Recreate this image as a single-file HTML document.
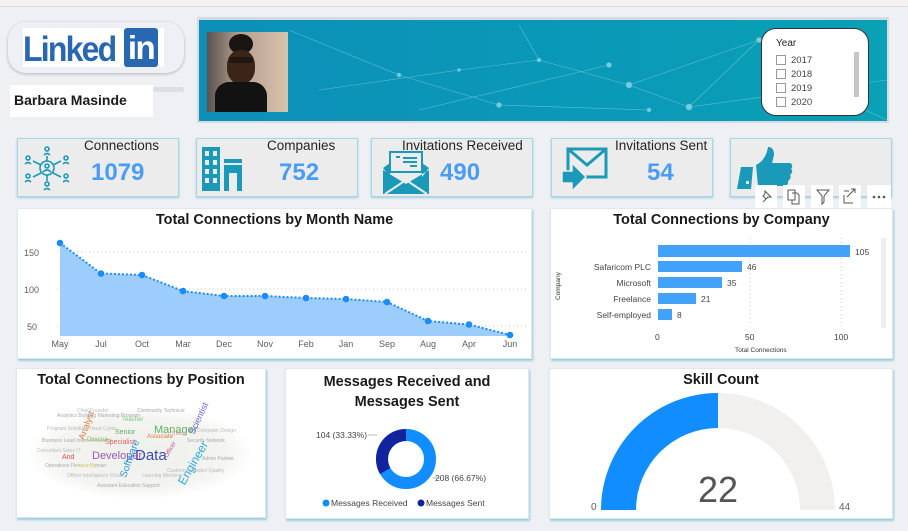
<!DOCTYPE html>
<html><head><meta charset="utf-8"><style>
*{margin:0;padding:0;box-sizing:border-box}
body{width:908px;height:531px;background:#eef0f4;font-family:"Liberation Sans",sans-serif;position:relative;overflow:hidden}
.a{position:absolute}
.card{position:absolute;background:#fff;box-shadow:1px 2px 2px rgba(120,190,210,.7);border:1px solid #dfe8ec}
.kpi{position:absolute;background:#ececec;border:1px solid #a9d6e3;box-shadow:0 1px 2px rgba(100,180,210,.6);top:138px;height:59px;width:162px}
.kpi .t{position:absolute;font-size:13.5px;color:#252423;top:-1px}
.kpi .v{position:absolute;font-size:24px;font-weight:bold;color:#4a9df5;top:20px}
.title{position:absolute;width:100%;text-align:center;font-weight:bold;font-size:14.5px;color:#1a1a1a}
.wc span{position:absolute;white-space:nowrap;font-size:5px;line-height:1}
</style></head><body>
<div class="a" style="left:0;top:0;width:908px;height:7px;background:#f3f2f1;border-bottom:1px solid #ddd"></div>

<div class="a" style="left:8px;top:22px;width:176px;height:51px;background:#eef0f5;border-radius:18px;box-shadow:0 1px 3px rgba(0,0,0,.25)"></div>
<div class="a" style="left:23px;top:28px;width:141px;height:39px;background:#fff"></div>
<div class="a" style="left:23px;top:29px;font-size:32px;font-weight:bold;color:#2867b2;letter-spacing:-1.8px;transform:scaleY(1.1);transform-origin:top left">Linked</div>
<div class="a" style="left:124px;top:28px;width:34px;height:39px;background:#2867b2;border-radius:3px;color:#fff;font-size:33px;font-weight:bold;text-align:center;line-height:40px;letter-spacing:-1.5px">in</div>
<div class="a" style="left:10px;top:85px;width:143px;height:32px;background:#fff"></div>
<div class="a" style="left:153px;top:87px;width:31px;height:5px;background:#dcdee2;border-radius:3px"></div>
<div class="a" style="left:14px;top:92px;font-size:14px;font-weight:bold;color:#1a1a1a">Barbara Masinde</div>

<div class="a" style="left:197px;top:17px;width:692px;height:106px;background:#d6dae2"></div>
<div class="a" style="left:199px;top:20px;width:688px;height:101px;background:linear-gradient(90deg,#0d8fb8,#0a9ab8 60%,#0aa0b5)">
<svg width="688" height="101" style="position:absolute;left:0;top:0" stroke="#7fd0e0" stroke-width=".6" fill="#a8e2ee" opacity=".7">
<line x1="90" y1="10" x2="200" y2="55"/><line x1="200" y1="55" x2="300" y2="85"/><line x1="260" y1="50" x2="340" y2="40"/><line x1="340" y1="40" x2="430" y2="65"/><line x1="430" y1="65" x2="560" y2="20"/><line x1="430" y1="65" x2="490" y2="87"/><line x1="490" y1="87" x2="560" y2="20"/><line x1="560" y1="20" x2="650" y2="30"/><line x1="220" y1="90" x2="410" y2="45"/><line x1="300" y1="85" x2="450" y2="90"/><line x1="600" y1="60" x2="688" y2="100"/><line x1="120" y1="70" x2="260" y2="50"/><line x1="340" y1="40" x2="320" y2="5"/><line x1="490" y1="87" x2="688" y2="60"/>
<circle cx="200" cy="55" r="2"/><circle cx="300" cy="85" r="2.5"/><circle cx="340" cy="40" r="2"/><circle cx="430" cy="65" r="3"/><circle cx="560" cy="20" r="2.5"/><circle cx="490" cy="87" r="3"/><circle cx="410" cy="45" r="2.5"/><circle cx="450" cy="90" r="2"/><circle cx="260" cy="50" r="1.5"/><circle cx="650" cy="30" r="2"/></svg>
</div>
<div class="a" style="left:207px;top:32px;width:81px;height:80px;background:linear-gradient(90deg,#5a5250 0%,#b6a08f 40%,#d7c2ad 100%)">
<div class="a" style="left:22px;top:2px;width:24px;height:20px;border-radius:50%;background:#1a1412"></div>
<div class="a" style="left:20px;top:18px;width:28px;height:34px;border-radius:45%;background:#3b2418"></div>
<div class="a" style="left:22px;top:25px;width:24px;height:6px;background:#111;opacity:.6"></div>
<div class="a" style="left:8px;top:50px;width:52px;height:30px;border-radius:14px 14px 0 0;background:#121212"></div>
</div>
<div class="a" style="left:761px;top:28px;width:108px;height:88px;background:#fff;border:1px solid #333;border-radius:15px"></div>
<div class="a" style="left:776px;top:38px;font-size:10px;color:#252423">Year</div>
<div class="a" style="left:854px;top:52px;width:5px;height:45px;background:#c8c6c4"></div>
<div class="a" style="left:776px;top:54px;font-size:9.5px;color:#444;line-height:14px">
<div><span style="display:inline-block;width:10px;height:10px;border:1px solid #999;vertical-align:-2px;margin-right:5px"></span>2017</div>
<div><span style="display:inline-block;width:10px;height:10px;border:1px solid #999;vertical-align:-2px;margin-right:5px"></span>2018</div>
<div><span style="display:inline-block;width:10px;height:10px;border:1px solid #999;vertical-align:-2px;margin-right:5px"></span>2019</div>
<div><span style="display:inline-block;width:10px;height:10px;border:1px solid #999;vertical-align:-2px;margin-right:5px"></span>2020</div>
</div>

<div class="kpi" style="left:17px"><span class="t" style="left:66px">Connections</span><span class="v" style="left:73px">1079</span>
<svg class="a" style="left:5px;top:5px" width="48" height="48" stroke="#1a9ab8" stroke-width="1.6" fill="none"><circle cx="24" cy="24" r="7"/><circle cx="24" cy="22" r="2"/><path d="M20 28q4-4 8 0"/><g><circle cx="24" cy="5" r="2"/><path d="M21 11q3-3 6 0"/><circle cx="24" cy="40" r="2"/><path d="M21 46q3-3 6 0"/><circle cx="5" cy="14" r="2"/><path d="M2 20q3-3 6 0"/><circle cx="43" cy="14" r="2"/><path d="M40 20q3-3 6 0"/><circle cx="5" cy="32" r="2"/><path d="M2 38q3-3 6 0"/><circle cx="43" cy="32" r="2"/><path d="M40 38q3-3 6 0"/><path d="M24 12v5M24 31v6M10 17l8 4M38 17l-8 4M10 33l8-4M38 33l-8-4"/></g></svg></div>
<div class="kpi" style="left:196px"><span class="t" style="left:70px">Companies</span><span class="v" style="left:82px">752</span>
<svg class="a" style="left:5px;top:8px" width="42" height="44" fill="#1a9ab8"><rect x="0" y="0" width="18" height="44"/><rect x="22" y="12" width="18" height="32"/><g fill="#ececec"><rect x="3" y="4" width="4" height="5"/><rect x="11" y="4" width="4" height="5"/><rect x="3" y="13" width="4" height="5"/><rect x="11" y="13" width="4" height="5"/><rect x="3" y="22" width="4" height="5"/><rect x="11" y="22" width="4" height="5"/><rect x="3" y="31" width="4" height="5"/><rect x="11" y="31" width="4" height="5"/><rect x="22" y="16" width="18" height="2"/><rect x="27" y="26" width="8" height="18"/></g></svg></div>
<div class="kpi" style="left:371px"><span class="t" style="left:30px">Invitations Received</span><span class="v" style="left:68px">490</span>
<svg class="a" style="left:11px;top:11px" width="46" height="46"><path d="M7 2h32v20H7z" fill="#ececec" stroke="#1a9ab8" stroke-width="2"/><path d="M13 7h4M20 8h14M20 12h14M27 16h7" stroke="#1a9ab8" stroke-width="2"/><path d="M0 18l7-5v14L0 18zM46 18l-7-5v14zM0 20l23 14 23-14v24H0z" fill="#1a9ab8"/><path d="M2 44l18-12M44 44l-18-12" stroke="#ececec" stroke-width="2"/></svg></div>
<div class="kpi" style="left:551px"><span class="t" style="left:63px">Invitations Sent</span><span class="v" style="left:95px">54</span>
<svg class="a" style="left:8px;top:8px" width="48" height="46" fill="none" stroke="#1a9ab8" stroke-width="3"><rect x="8" y="2" width="38" height="28"/><path d="M8 2l19 16 19-16"/><path d="M2 24h10v-8l14 14-14 14v-8H2z" fill="#1a9ab8" stroke="#ececec" stroke-width="1.5"/></svg></div>
<div class="kpi" style="left:730px">
<svg class="a" style="left:5px;top:6px" width="60" height="50" fill="#1a9ab8"><path d="M5 22h12l-2 22H1z"/><path d="M20 20q10-5 12-18q6 0 6 8l-2 8h18q4 2 1 6q3 2-1 6q2 3-2 6q1 4-4 5H22z"/><rect x="10" y="36" width="3" height="3" fill="#ececec"/></svg></div>

<div class="a" style="left:755px;top:185px;width:138px;height:23px;font-size:0">
<svg width="138" height="23"><g fill="#fff"><rect x="0" y="0" width="22" height="23"/><rect x="28" y="0" width="22" height="23"/><rect x="56" y="0" width="22" height="23"/><rect x="84" y="0" width="22" height="23"/><rect x="112" y="0" width="24" height="23"/></g>
<g stroke="#555" fill="none" stroke-width="1"><path d="M8 17l4-4M10 6l6 6-3 0-2 2-3-3 2-2z"/><rect x="33" y="5" width="7" height="10"/><path d="M37 8h5l2 2v9h-7v-4"/><path d="M62 5h12l-5 6v6l-2 2v-8z"/><path d="M89 10v8h9M92 12l8-8M96 4h4v4M89 6h5"/><circle cx="119" cy="12" r=".8" fill="#555"/><circle cx="124" cy="12" r=".8" fill="#555"/><circle cx="129" cy="12" r=".8" fill="#555"/></g></svg></div>

<div class="card" style="left:17px;top:208px;width:515px;height:151px">
<div class="title" style="top:3px">Total Connections by Month Name</div></div>
<svg class="a" style="left:17px;top:208px" width="515" height="151">
<g stroke="#ccc" stroke-dasharray="1 3"><line x1="40" y1="44" x2="510" y2="44"/><line x1="40" y1="81" x2="510" y2="81"/><line x1="40" y1="118" x2="510" y2="118"/></g>
<path d="M43 35L84 65.5 125 67 166 83 207 88 248 88 289 90 329 91 370 94 411 113 452 116.5 493 127V128H43Z" fill="#9dcdfc"/>
<path d="M43 35L84 65.5 125 67 166 83 207 88 248 88 289 90 329 91 370 94 411 113 452 116.5 493 127" fill="none" stroke="#1a8cff" stroke-width="2" stroke-dasharray="2 2"/>
<g fill="#1a8cff"><circle cx="43" cy="35" r="3.3"/><circle cx="84" cy="65.5" r="3.3"/><circle cx="125" cy="67" r="3.3"/><circle cx="166" cy="83" r="3.3"/><circle cx="207" cy="88" r="3.3"/><circle cx="248" cy="88" r="3.3"/><circle cx="289" cy="90" r="3.3"/><circle cx="329" cy="91" r="3.3"/><circle cx="370" cy="94" r="3.3"/><circle cx="411" cy="113" r="3.3"/><circle cx="452" cy="116.5" r="3.3"/><circle cx="493" cy="127" r="3.3"/></g>
<g font-size="9" fill="#605e5c" font-family="Liberation Sans"><text x="7" y="48">150</text><text x="7" y="85">100</text><text x="10" y="122">50</text>
<g text-anchor="middle"><text x="43" y="139">May</text><text x="84" y="139">Jul</text><text x="125" y="139">Oct</text><text x="166" y="139">Mar</text><text x="207" y="139">Dec</text><text x="248" y="139">Nov</text><text x="289" y="139">Feb</text><text x="329" y="139">Jan</text><text x="370" y="139">Sep</text><text x="411" y="139">Aug</text><text x="452" y="139">Apr</text><text x="493" y="139">Jun</text></g></g></svg>

<div class="card" style="left:550px;top:208px;width:343px;height:151px">
<div class="title" style="top:3px">Total Connections by Company</div></div>
<svg class="a" style="left:550px;top:208px" width="343" height="151">
<g stroke="#ccc" stroke-dasharray="1 3"><line x1="200" y1="30" x2="200" y2="118"/><line x1="291" y1="30" x2="291" y2="118"/></g>
<rect x="331" y="30" width="5" height="90" fill="#eee"/>
<g fill="#42a2f9"><rect x="108" y="37" width="192" height="12"/><rect x="108" y="53" width="84" height="11"/><rect x="108" y="69" width="64" height="11"/><rect x="108" y="85" width="38" height="11"/><rect x="108" y="101" width="14" height="11"/></g>
<g font-size="8.5" fill="#444" font-family="Liberation Sans"><text x="305" y="47">105</text><text x="197" y="62">46</text><text x="177" y="78">35</text><text x="151" y="94">21</text><text x="127" y="110">8</text>
<g text-anchor="end"><text x="101" y="62">Safaricom PLC</text><text x="101" y="78">Microsoft</text><text x="101" y="94">Freelance</text><text x="101" y="110">Self-employed</text></g>
<text x="105" y="132">0</text><text x="195" y="132">50</text><text x="284" y="132">100</text></g>
<text x="185" y="144" font-size="6.5" fill="#333" font-family="Liberation Sans">Total Connections</text>
<text transform="translate(10,92) rotate(-90)" font-size="6.5" fill="#333" font-family="Liberation Sans">Company</text></svg>

<div class="card" style="left:16px;top:368px;width:250px;height:150px">
<div class="title" style="top:3px">Total Connections by Position</div>
<div class="a" style="left:12px;top:38px;width:222px;height:92px;border-radius:50%;background:radial-gradient(ellipse,#eef0ea 0%,#f4f4f2 55%,#fff 72%)"></div>
<div class="a wc" style="left:0;top:0;width:250px;height:150px">
<span style="left:118px;top:79px;font-size:15px;color:#3a4bb0">Data</span>
<span style="left:75px;top:82px;font-size:11px;color:#9b59b6">Developer</span>
<span style="left:137px;top:56px;font-size:11px;color:#5bb35b">Manager</span>
<span style="left:152px;top:88px;font-size:12px;color:#29a9e0;transform:rotate(-60deg)">Engineer</span>
<span style="left:94px;top:85px;font-size:10px;color:#2a9ae0;transform:rotate(-70deg)">Software</span>
<span style="left:55px;top:52px;font-size:9px;color:#e07a3a;transform:rotate(-70deg)">Analyst</span>
<span style="left:165px;top:45px;font-size:9px;color:#6a6ad0;transform:rotate(-65deg)">Scientist</span>
<span style="left:88px;top:70px;font-size:7px;color:#e06060">Specialist</span>
<span style="left:98px;top:60px;font-size:7px;color:#60b060">Senior</span>
<span style="left:45px;top:85px;font-size:7px;color:#e05050">And</span>
<span style="left:130px;top:65px;font-size:6px;color:#e07a3a">Associate</span>
<span style="left:145px;top:78px;font-size:6px;color:#d04a8a;transform:rotate(-60deg)">Officer</span>
<span style="left:70px;top:68px;font-size:6px;color:#8bc34a">Director</span>
<span style="left:40px;top:45px;color:#aaa">Analytics Building Marketing Program</span>
<span style="left:30px;top:58px;color:#bbb">Program Solutions Head Cyber</span>
<span style="left:25px;top:70px;color:#aaa">Business Lead Intern Research</span>
<span style="left:20px;top:80px;color:#bbb">Consultant Sales IT</span>
<span style="left:28px;top:95px;color:#aaa">Operations Finance Human</span>
<span style="left:50px;top:105px;color:#bbb">Officer Intelligence Cloud</span>
<span style="left:80px;top:115px;color:#aaa">Assistant Education Support</span>
<span style="left:150px;top:100px;color:#bbb">Customer Product Quality</span>
<span style="left:170px;top:70px;color:#aaa">Security Network</span>
<span style="left:180px;top:60px;color:#bbb">Computer Design</span>
<span style="left:120px;top:40px;color:#aaa">Community Technical</span>
<span style="left:60px;top:40px;color:#bbb">Chief Founder</span>
<span style="left:185px;top:88px;color:#aaa">Admin Partner</span>
<span style="left:125px;top:105px;color:#bbb">Learning Machine</span>
<span style="left:60px;top:95px;color:#ee8">Strategy</span>
<span style="left:105px;top:48px;color:#7c7;font-size:6px">Teacher</span>
<span style="left:155px;top:62px;color:#e9a;font-size:6px">Intern</span>
</div></div>

<div class="card" style="left:285px;top:368px;width:244px;height:151px">
<div class="title" style="top:3px;line-height:20px">Messages Received and<br>Messages Sent</div></div>
<svg class="a" style="left:285px;top:368px" width="244" height="151">
<circle cx="121" cy="91" r="24" fill="none" stroke="#118dff" stroke-width="12"/>
<path d="M121 61A30 30 0 0 0 95 106L105.4 100A18 18 0 0 1 121 73Z" fill="#12239e"/>
<g stroke="#bbb" stroke-width="1"><line x1="83" y1="67" x2="92" y2="67"/><line x1="148" y1="110" x2="156" y2="110"/></g>
<g font-size="8.5" fill="#444" font-family="Liberation Sans"><text x="31" y="70">104 (33.33%)</text><text x="150" y="113">208 (66.67%)</text>
<circle cx="41" cy="135" r="3.5" fill="#118dff"/><text x="46" y="138">Messages Received</text>
<circle cx="136" cy="135" r="3.5" fill="#12239e"/><text x="141" y="138">Messages Sent</text></g></svg>

<div class="card" style="left:549px;top:368px;width:344px;height:151px">
<div class="title" style="top:3px">Skill Count</div></div>
<svg class="a" style="left:549px;top:368px" width="344" height="151">
<path d="M52 142A117 117 0 0 1 286 142H251A82 82 0 0 0 87 142Z" fill="#f1f0ef"/>
<path d="M52 142A117 117 0 0 1 169 25V60A82 82 0 0 0 87 142Z" fill="#118dff"/>
<text x="169" y="134" font-size="36" fill="#555" text-anchor="middle" font-family="Liberation Sans">22</text>
<text x="42" y="142" font-size="10" fill="#605e5c" font-family="Liberation Sans">0</text>
<text x="290" y="142" font-size="10" fill="#605e5c" font-family="Liberation Sans">44</text></svg>
</body></html>
